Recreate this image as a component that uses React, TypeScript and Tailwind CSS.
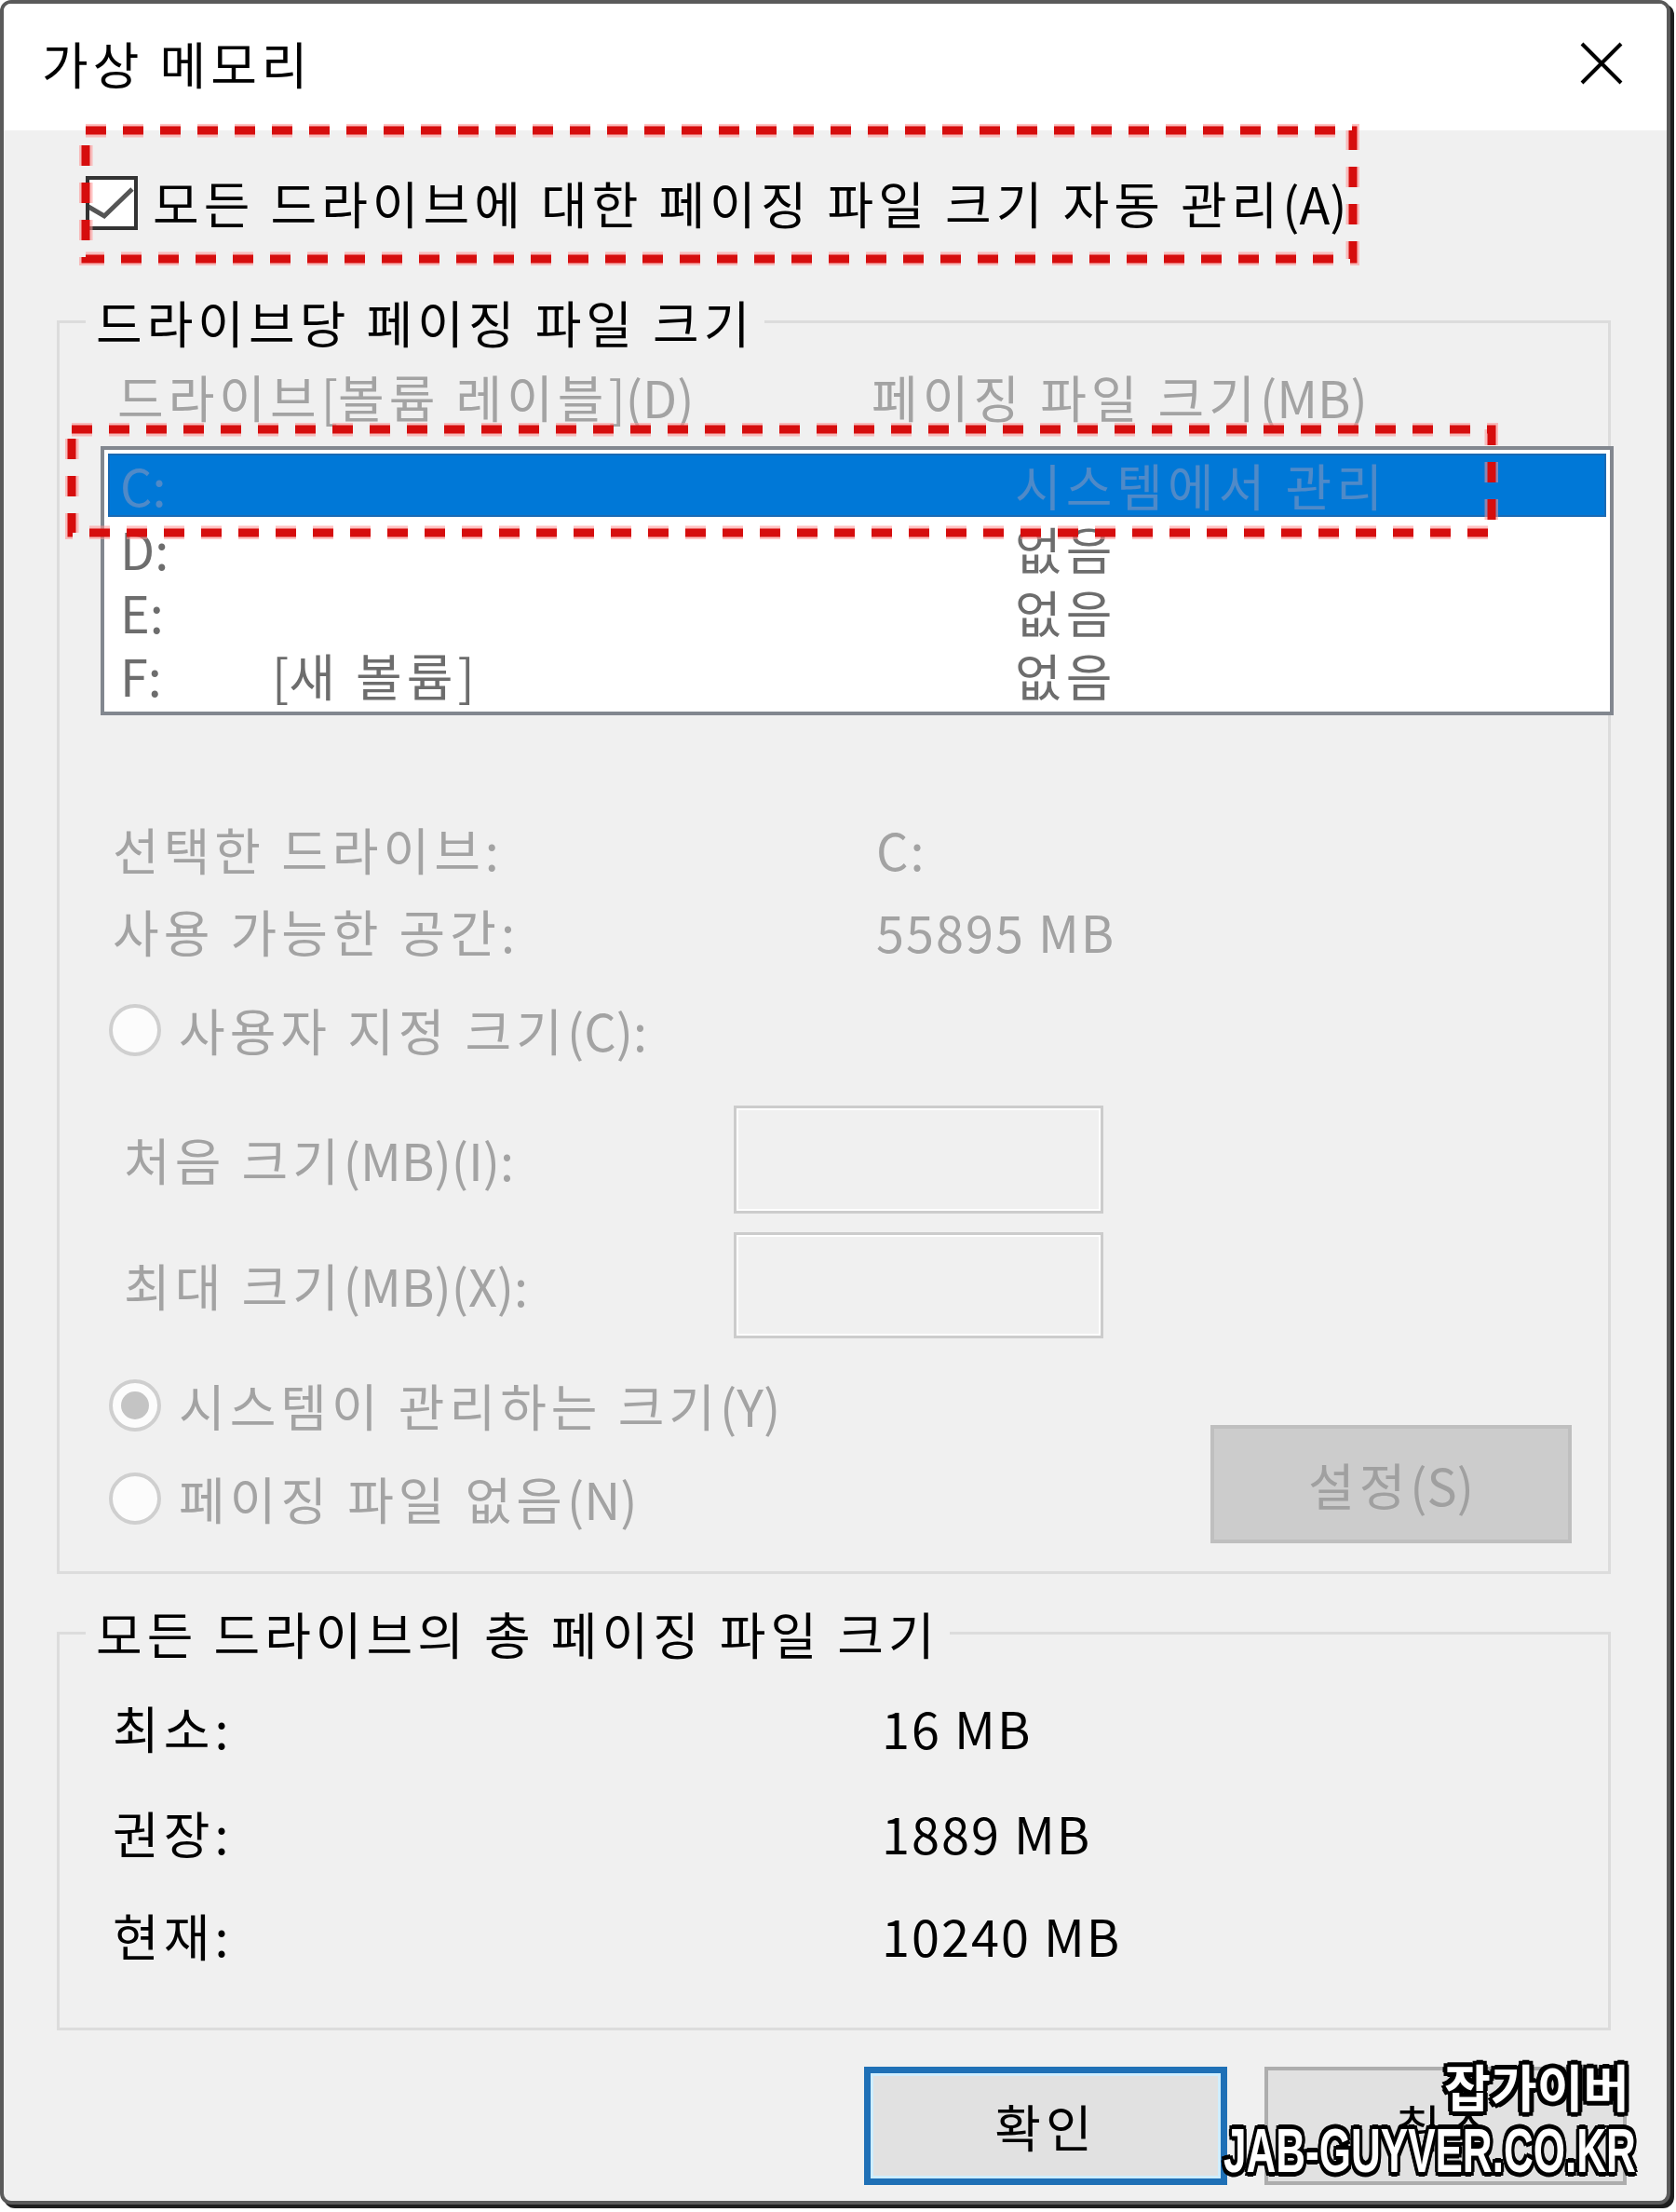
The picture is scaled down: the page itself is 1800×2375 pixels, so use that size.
import React from 'react'

const FONT = "font-['Noto_Sans_CJK_KR','Noto_Sans',sans-serif]"
const NUM = 'tracking-[2px]'

// Hangul runs are spaced wider than the latin bits, like the upscaled Windows font
function Ko({ children }: { children: string }) {
  const parts = children.split(/([A-Za-z0-9()[\]:.]+)/)
  return (
    <>
      {parts.map((p, i) =>
        p === '' ? null : (
          <span key={i} className={i % 2 ? 'tracking-normal' : 'tracking-[5px]'}>
            {p}
          </span>
        )
      )}
    </>
  )
}

function DashBox({ w, h, className }: { w: number; h: number; className: string }) {
  // red marker rectangle drawn over the dialog
  return (
    <svg width={w + 14} height={h + 14} className={`absolute pointer-events-none ${className}`}>
      <rect x={7} y={7} width={w} height={h} fill="none" stroke="#ff8f8f" strokeOpacity={0.55} strokeWidth={15} strokeDasharray="22 18" />
      <rect x={7} y={7} width={w} height={h} fill="none" stroke="#d60d0d" strokeWidth={9} strokeDasharray="22 18" />
    </svg>
  )
}

function Checkbox() {
  return (
    <div className="w-[56px] h-[58px] flex-none border-[4px] border-[#333333] bg-white">
      <svg viewBox="0 0 48 50" className="w-full h-full">
        <path d="M-1 29 L16 39 L46 10" fill="none" stroke="#555555" strokeWidth="5" />
      </svg>
    </div>
  )
}

function Radio({ checked }: { checked?: boolean }) {
  return (
    <div className="w-[56px] h-[56px] flex-none rounded-full border-[4px] border-[#cfcfcf] bg-[#fcfcfc] flex items-center justify-center">
      {checked && <div className="w-[30px] h-[30px] rounded-full bg-[#c4c4c4]" />}
    </div>
  )
}

function GroupBox({ title, className, children }: { title: string; className: string; children?: React.ReactNode }) {
  return (
    <div className={`relative ml-[57px] w-[1669px] border-[3px] border-[#dcdcdc] ${className}`}>
      <span className="absolute left-[28px] top-[-28px] h-[54px] px-[11px] bg-[#f0f0f0] flex items-center text-[54px] leading-none text-black">
        <Ko>{title}</Ko>
      </span>
      {children}
    </div>
  )
}

const drives = [
  { letter: 'C:', label: '', size: '시스템에서 관리', selected: true },
  { letter: 'D:', label: '', size: '없음' },
  { letter: 'E:', label: '', size: '없음' },
  { letter: 'F:', label: '[새 볼륨]', size: '없음' },
]

const totals = [
  { label: '최소:', value: '16 MB', mt: 'mt-[74px]' },
  { label: '권장:', value: '1889 MB', mt: 'mt-[61px]' },
  { label: '현재:', value: '10240 MB', mt: 'mt-[58px]' },
]

export default function App() {
  return (
    <div className={`w-[1800px] h-[2375px] bg-white ${FONT}`}>
      <div className="w-[1794px] h-[2367px] border-[4px] border-[#5a5a5a] rounded-[12px] shadow-[4px_4px_0_#1e1e1e] bg-[#f0f0f0] overflow-hidden">
        {/* Title bar */}
        <div className="h-[136px] bg-white flex items-center justify-between pl-[41px] pr-[47px] pb-[8px]">
          <span className="text-[54px] leading-none text-black">
            <Ko>가상 메모리</Ko>
          </span>
          <svg width="46" height="46" viewBox="0 0 46 46">
            <path d="M2 2 L44 44 M44 2 L2 44" stroke="#000" strokeWidth="4" />
          </svg>
        </div>

        {/* Auto manage checkbox */}
        <div className="relative mt-[49px] ml-[88px] h-[58px] flex items-center gap-[16px]">
          <Checkbox />
          <span className="text-[54px] leading-none text-black">
            <Ko>모든 드라이브에 대한 페이징 파일 크기 자동 관리(A)</Ko>
          </span>
          <DashBox w={1361} h={138} className="left-[-7px] top-[-56px]" />
        </div>

        {/* Per drive */}
        <GroupBox title="드라이브당 페이징 파일 크기" className="mt-[97px] h-[1346px]">
          <div className="mt-[53px] h-[52px] pl-[62px] flex items-center text-[54px] leading-none text-[#a3a3a3]">
            <span className="w-[810px]">
              <Ko>드라이브[볼륨 레이블](D)</Ko>
            </span>
            <span>
              <Ko>페이징 파일 크기(MB)</Ko>
            </span>
          </div>

          <div className="relative mt-[27px] ml-[44px] w-[1625px] h-[289px] border-[4px] border-[#82878f] bg-white p-[4px]">
            {drives.map((d) => (
              <div
                key={d.letter}
                className={`h-[68px] pl-[13px] flex items-center text-[54px] leading-none ${
                  d.selected ? 'bg-[#0078d7] text-[#4f8ac8] shadow-[inset_0_0_0_2px_#1a6ab4]' : 'text-[#6d6d6d]'
                }`}
              >
                <span className="w-[163px]">{d.letter}</span>
                <span className="w-[798px]">
                  <Ko>{d.label}</Ko>
                </span>
                <span>
                  <Ko>{d.size}</Ko>
                </span>
              </div>
            ))}
            <DashBox w={1525} h={111} className="left-[-42px] top-[-29px]" />
          </div>

          <div className="mt-[118px] h-[52px] pl-[57px] flex items-center text-[54px] leading-none text-[#a3a3a3]">
            <span className="w-[820px]">
              <Ko>선택한 드라이브:</Ko>
            </span>
            <span className={NUM}>C:</span>
          </div>
          <div className="mt-[36px] h-[52px] pl-[57px] flex items-center text-[54px] leading-none text-[#a3a3a3]">
            <span className="w-[820px]">
              <Ko>사용 가능한 공간:</Ko>
            </span>
            <span className={NUM}>55895 MB</span>
          </div>

          <div className="mt-[52px] ml-[53px] h-[56px] flex items-center gap-[19px] text-[54px] leading-none text-[#a3a3a3]">
            <Radio />
            <span>
              <Ko>사용자 지정 크기(C):</Ko>
            </span>
          </div>

          <div className="mt-[53px] h-[116px] pl-[69px] flex items-center text-[54px] leading-none text-[#a3a3a3]">
            <span className="w-[655px]">
              <Ko>처음 크기(MB)(I):</Ko>
            </span>
            <div className="w-[397px] h-[116px] border-[3px] border-[#cccccc] bg-[#f0f0f0] shadow-[inset_0_0_0_2px_#ffffff]" />
          </div>
          <div className="mt-[20px] h-[114px] pl-[69px] flex items-center text-[54px] leading-none text-[#a3a3a3]">
            <span className="w-[655px]">
              <Ko>최대 크기(MB)(X):</Ko>
            </span>
            <div className="w-[397px] h-[114px] border-[3px] border-[#cccccc] bg-[#f0f0f0] shadow-[inset_0_0_0_2px_#ffffff]" />
          </div>

          <div className="mt-[44px] flex items-start justify-between">
            <div className="ml-[53px] flex flex-col gap-[44px] text-[54px] leading-none text-[#a3a3a3]">
              <div className="h-[56px] flex items-center gap-[19px]">
                <Radio checked />
                <span>
                  <Ko>시스템이 관리하는 크기(Y)</Ko>
                </span>
              </div>
              <div className="h-[56px] flex items-center gap-[19px]">
                <Radio />
                <span>
                  <Ko>페이징 파일 없음(N)</Ko>
                </span>
              </div>
            </div>
            <div className="mt-[49px] mr-[39px] w-[388px] h-[127px] border-[4px] border-[#bfbfbf] bg-[#cccccc] flex items-center justify-center text-[54px] leading-none text-[#a0a0a0]">
              <Ko>설정(S)</Ko>
            </div>
          </div>
        </GroupBox>

        {/* Totals */}
        <GroupBox title="모든 드라이브의 총 페이징 파일 크기" className="mt-[62px] h-[428px]">
          {totals.map((t) => (
            <div key={t.label} className={`${t.mt} h-[52px] pl-[57px] flex items-center text-[54px] leading-none text-black`}>
              <span className="w-[826px]">
                <Ko>{t.label}</Ko>
              </span>
              <span className={NUM}>{t.value}</span>
            </div>
          ))}
        </GroupBox>

        {/* Buttons */}
        <div className="relative mt-[39px] h-[127px] pr-[43px] flex justify-end gap-[40px]">
          <div className="w-[390px] h-[127px] border-[7px] border-[#1f70b6] bg-[#e1e1e1] shadow-[inset_0_0_0_3px_#cfeefe] flex items-center justify-center text-[54px] leading-none text-black">
            <Ko>확인</Ko>
          </div>
          <div className="w-[389px] h-[127px] border-[4px] border-[#adadad] bg-[#e1e1e1] flex items-center justify-center text-[54px] leading-none text-black">
            <Ko>취소</Ko>
          </div>

          {/* watermark */}
          <div className="absolute right-[33px] top-[-6px] flex flex-col items-end text-white [text-shadow:5px_0_0_#000,-5px_0_0_#000,0_5px_0_#000,0_-5px_0_#000,4px_4px_0_#000,-4px_4px_0_#000,4px_-4px_0_#000,-4px_-4px_0_#000]">
            <span className="mr-[7px] text-[54px] leading-none font-bold">잡가이버</span>
            <span className="mt-[9px] inline-block origin-right scale-x-[0.667] font-['Liberation_Sans',sans-serif] text-[66px] leading-none font-bold whitespace-nowrap">
              JAB-GUYVER.CO.KR
            </span>
          </div>
        </div>
      </div>
    </div>
  )
}
